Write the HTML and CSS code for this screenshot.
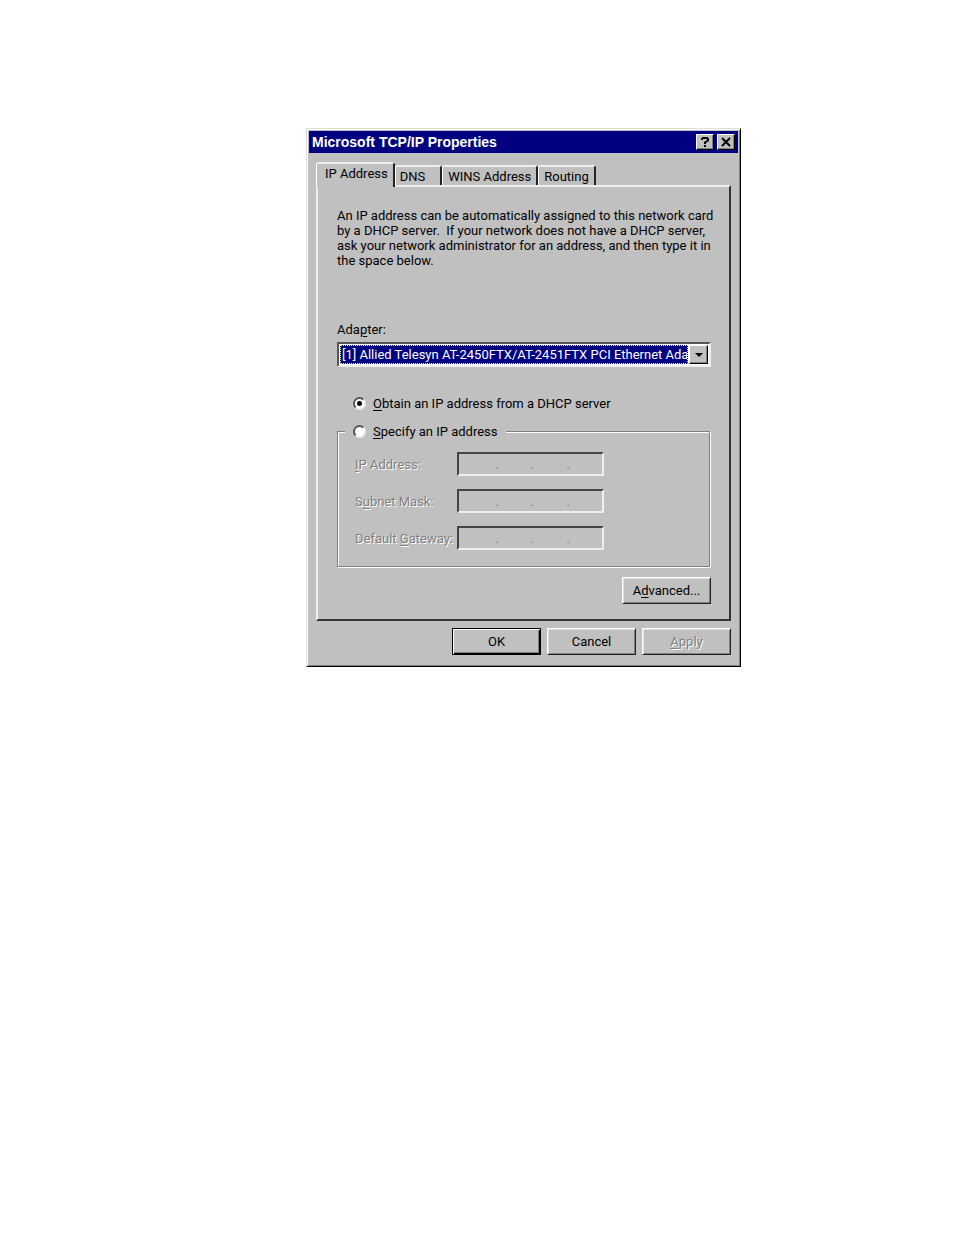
FILE: index.html
```html
<!DOCTYPE html>
<html lang="en">
<head>
    <meta charset="UTF-8">
    <meta name="viewport" content="width=device-width, initial-scale=1.0">
    <title>Microsoft TCP/IP Properties</title>
    <link rel="stylesheet" href="styles.css">
</head>
<body>
    <main class="dialog">
        <header class="title-bar">
            <h1>Microsoft TCP/IP Properties</h1>
            <button class="title-button" aria-label="Help">
                <svg width="8" height="10" viewBox="0 0 8 10"><path d="M1 3V2L2 1H6L7 2V3.500L4 5.500V7M4 8V10" fill="none" stroke="#000" stroke-width="2"/></svg>
            </button>
            <button class="title-button" aria-label="Close">
                <svg width="10" height="10" viewBox="0 0 10 10"><path d="M1 1L9 9M9 1L1 9" stroke="#000" stroke-width="2"/></svg>
            </button>
        </header>

        <div class="tabs" role="tablist">
            <button class="tab active" role="tab" aria-selected="true">IP Address</button>
            <button class="tab tab-dns" role="tab">DNS</button>
            <button class="tab" role="tab">WINS Address</button>
            <button class="tab" role="tab">Routing</button>
        </div>

        <section class="panel">
            <p class="intro">An IP address can be automatically assigned to this network card<br>
                by a DHCP server.&nbsp; If your network does not have a DHCP server,<br>
                ask your network administrator for an address, and then type it in<br>
                the space below.</p>

            <label class="adapter-label" for="adapter">Ada<u>p</u>ter:</label>
            <div class="combo">
                <select id="adapter">
                    <option>[1] Allied Telesyn AT-2450FTX/AT-2451FTX PCI Ethernet Adapter</option>
                </select>
                <span class="combo-arrow">
                    <svg width="8" height="4" viewBox="0 0 8 4"><path d="M0 0H8L4 4Z"/></svg>
                </span>
            </div>

            <div class="radio-row">
                <input type="radio" name="mode" id="dhcp" checked>
                <label for="dhcp"><u>O</u>btain an IP address from a DHCP server</label>
            </div>

            <fieldset class="group">
                <legend>
                    <input type="radio" name="mode" id="specify">
                    <label for="specify"><u>S</u>pecify an IP address</label>
                </legend>
                <div class="ip-row">
                    <label for="ip-1"><u>I</u>P Address:</label>
                    <div class="ip-field">
                        <input type="text" id="ip-1" disabled><span>.</span><input type="text" aria-label="IP address part 2" disabled><span>.</span><input type="text" aria-label="IP address part 3" disabled><span>.</span><input type="text" aria-label="IP address part 4" disabled>
                    </div>
                </div>
                <div class="ip-row">
                    <label for="mask-1">S<u>u</u>bnet Mask:</label>
                    <div class="ip-field">
                        <input type="text" id="mask-1" disabled><span>.</span><input type="text" aria-label="Subnet mask part 2" disabled><span>.</span><input type="text" aria-label="Subnet mask part 3" disabled><span>.</span><input type="text" aria-label="Subnet mask part 4" disabled>
                    </div>
                </div>
                <div class="ip-row">
                    <label for="gateway-1">Default <u>G</u>ateway:</label>
                    <div class="ip-field">
                        <input type="text" id="gateway-1" disabled><span>.</span><input type="text" aria-label="Gateway part 2" disabled><span>.</span><input type="text" aria-label="Gateway part 3" disabled><span>.</span><input type="text" aria-label="Gateway part 4" disabled>
                    </div>
                </div>
            </fieldset>

            <div class="panel-actions">
                <button class="btn">A<u>d</u>vanced...</button>
            </div>
        </section>

        <footer class="actions">
            <button class="btn default">OK</button>
            <button class="btn">Cancel</button>
            <button class="btn" disabled><u>A</u>pply</button>
        </footer>
    </main>
</body>
</html>
```
FILE: styles.css
```css
* {
    box-sizing: border-box;
}
body {
    margin: 128px 213px 0 306px;
    background: #fff;
    color: #000;
    font-family: Roboto, "Liberation Sans", Arial, sans-serif;
    font-size: 13px;
    line-height: 15px;
}
button, input, select {
    margin: 0;
    padding: 0;
    font: inherit;
    color: inherit;
    border-radius: 0;
}
u {
    text-decoration: underline;
    text-underline-offset: 2px;
}
.dialog {
    min-width: 435px;
    padding: 1px;
    background: #c0c0c0;
    border: 1px solid;
    border-color: #dfdfdf #000 #000 #dfdfdf;
    box-shadow: inset 1px 1px #fff, inset -1px -1px #808080;
}

/* title bar */
.title-bar {
    display: flex;
    align-items: center;
    height: 22px;
    margin: 1px 1px 0;
    padding: 0 3px;
    background: #000080;
    color: #fff;
}
.title-bar h1 {
    flex: 1;
    margin: 0;
    font-family: "Liberation Sans", Arial, sans-serif;
    font-size: 14px;
    font-weight: bold;
}
.title-button {
    display: flex;
    align-items: center;
    justify-content: center;
    width: 18px;
    height: 16px;
    background: #c0c0c0;
    border: 1px solid;
    border-color: #fff #000 #000 #fff;
    box-shadow: inset -1px -1px #808080;
}
.title-button + .title-button {
    margin-left: 3px;
}

/* tabs */
.tabs {
    display: flex;
    align-items: flex-end;
    height: 32px;
    padding-left: 8px;
}
.tab {
    height: 20px;
    padding: 0 5px;
    background: #c0c0c0;
    border: solid;
    border-width: 2px 2px 0 1px;
    border-color: #eee #222 #222 #fff;
    border-radius: 3px 3px 0 0;
    white-space: nowrap;
}
.tab.active {
    position: relative;
    z-index: 1;
    height: 25px;
    margin-bottom: -2px;
    padding: 0 5px 4px 8px;
}
.tab-dns {
    padding: 0 15px 0 4px;
}
.panel {
    margin: 0 8px;
    padding: 21px 18px 15px 19px;
    border: 2px solid;
    border-color: #eee #333 #333 #eee;
}
.intro {
    margin: 0 0 54px;
    white-space: nowrap;
}
.adapter-label {
    display: block;
    margin-bottom: 5px;
}

/* adapter drop-down */
.combo {
    display: flex;
    height: 25px;
    padding: 1px;
    background: #fff;
    border: 2px solid;
    border-color: #555 #eee #eee #555;
}
.combo select {
    flex: 1;
    min-width: 0;
    margin-right: 1px;
    padding-left: 1px;
    appearance: none;
    background: #000080;
    border: 1px dotted #ffff7f;
    color: #fff;
    outline: none;
}
.combo-arrow {
    display: flex;
    align-items: center;
    justify-content: center;
    width: 19px;
    background: #c0c0c0;
    border: 1px solid;
    border-color: #fff #000 #000 #fff;
    box-shadow: inset -1px -1px #808080;
    pointer-events: none;
}

/* radio buttons */
input[type="radio"] {
    width: 13px;
    height: 13px;
    appearance: none;
    background: #fff;
    border: 2px solid;
    border-color: #555 #eee #eee #555;
    border-radius: 50%;
}
input[type="radio"]:checked {
    background: radial-gradient(circle, #000 2px, #fff 3px);
}
.radio-row, legend {
    display: flex;
    align-items: center;
    gap: 7px;
}
.radio-row {
    margin: 29px 0 13px 16px;
}

/* static address group */
.group {
    margin: 0 1px 0 0;
    padding: 13px 17px 16px;
    border: 1px solid #808080;
    box-shadow: 1px 1px #fff, inset 1px 1px #fff;
}
legend {
    margin-left: -10px;
    padding: 0 8px;
    background: #c0c0c0;
}
.ip-row {
    display: flex;
    align-items: center;
}
.ip-row + .ip-row {
    margin-top: 13px;
}
.ip-row label {
    width: 102px;
    color: #808080;
    text-shadow: 1px 1px #fff;
    white-space: nowrap;
}
.ip-field {
    display: flex;
    width: 147px;
    height: 24px;
    padding: 3px 0 3px 4px;
    border: 2px solid;
    border-color: #444 #eee #eee #444;
    color: #808080;
}
.ip-field input {
    flex: 1;
    min-width: 0;
    background: transparent;
    border: none;
    text-align: center;
}

/* buttons */
.btn {
    width: 89px;
    height: 27px;
    background: #c0c0c0;
    border: 1px solid;
    border-color: #fff #222 #222 #fff;
    box-shadow: inset 1px 1px #dfdfdf, inset -1px -1px #808080;
}
.btn.default {
    border: 1px solid #000;
    box-shadow: inset 1px 1px #fff, inset -1px -1px #000, inset -2px -2px #808080;
}
.btn:disabled {
    color: #808080;
    text-shadow: 1px 1px #fff;
}
.panel-actions {
    display: flex;
    justify-content: flex-end;
    margin-top: 10px;
}
.actions {
    display: flex;
    justify-content: flex-end;
    gap: 6px;
    padding: 7px 8px 10px;
}
```
